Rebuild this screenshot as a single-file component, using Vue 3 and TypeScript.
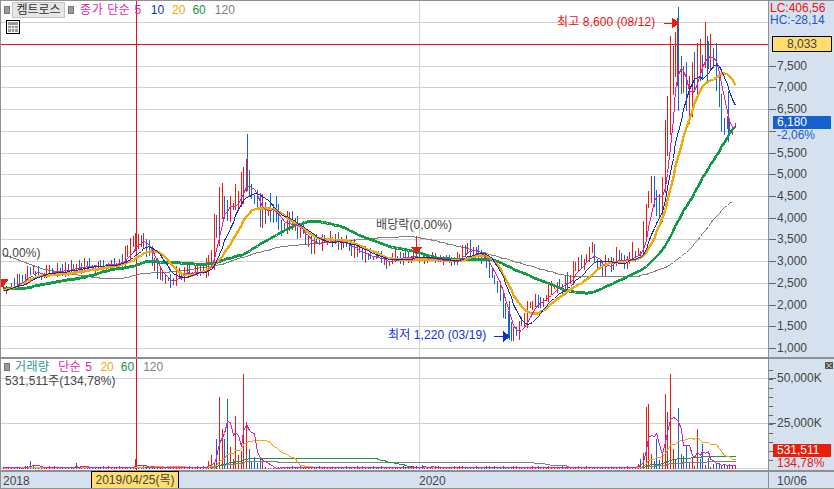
<script setup lang="ts">
type Pt = [number, number]

const lerp = (pts: Pt[], x: number): number => {
  if (x <= pts[0][0]) return pts[0][1]
  for (let i = 1; i < pts.length; i++) {
    if (x <= pts[i][0]) {
      const [a, b] = pts[i - 1]
      const [c, d] = pts[i]
      return b + ((d - b) * (x - a)) / (c - a)
    }
  }
  return pts[pts.length - 1][1]
}
const rnd = (n: number): number => {
  const s = Math.sin(n * 127.1 + 11.7) * 43758.5453
  return s - Math.floor(s)
}
const toPath = (pts: Pt[]): string =>
  pts.map((p, i) => `${i ? 'L' : 'M'}${p[0].toFixed(1)} ${p[1].toFixed(1)}`).join('')

// resample a hand-read curve at candle spacing, soften it and snap to pixels
const smooth = (keys: Pt[]): string => {
  const start = keys[0][0]
  const end = keys[keys.length - 1][0]
  const out: Pt[] = []
  for (let x = start; x <= end + 0.01; x += 2.7) {
    // the window narrows at both ends so the curve still reaches its end points
    const reach = Math.min(2, Math.floor((x - start) / 2.7), Math.floor((end - x) / 2.7))
    let sum = 0
    let cnt = 0
    for (let k = -reach; k <= reach; k++) {
      sum += lerp(keys, x + k * 2.7)
      cnt++
    }
    out.push([Math.round(x) + 0.5, Math.round(sum / cnt) + 0.5])
  }
  return toPath(out)
}

const closeKeys: Pt[] = [[2,288],[10,285],[20,278],[30,268],[40,272],[60,270],[80,264],[100,265],[120,262],[128,252],[135,232],[142,240],[150,262],[160,275],[168,284],[175,275],[190,272],[205,270],[212,240],[218,205],[225,210],[235,195],[245,170],[250,190],[258,205],[270,215],[285,222],[300,230],[310,245],[320,238],[335,242],[350,247],[370,258],[385,262],[400,255],[420,256],[440,260],[455,258],[465,248],[475,250],[485,262],[493,280],[500,300],[507,330],[513,335],[520,320],[530,305],[545,292],[560,285],[575,265],[590,252],[600,268],[615,258],[630,255],[640,250],[645,200],[650,190],[660,205],[665,140],[668,70],[675,50],[680,90],[690,90],[697,60],[705,55],[712,62],[716,85],[720,120],[725,130],[730,128],[735,120]]
const volKeys: Pt[] = [[0,7],[120,9],[135,13],[200,8],[215,24],[250,24],[300,11],[400,8],[480,8],[500,11],[560,10],[640,12],[650,16],[670,36],[712,30],[725,12],[735,8]]

const step = 2.7
const n = Math.floor((735 - 2) / step) + 1
const xs = Array.from({ length: n }, (_, i) => Math.round(2 + i * step))
const closes = xs.map((x, i) => lerp(closeKeys, x) + (rnd(i) - 0.5) * lerp(volKeys, x) * 0.9)

const candles = xs.map((x, i) => {
  const c = closes[i]
  const o = i ? closes[i - 1] : c
  const v = lerp(volKeys, x)
  return {
    x: x + 0.5,
    top: Math.min(o, c) - rnd(i + 500) * v * 0.9,
    bot: Math.max(o, c) + rnd(i + 900) * v * 0.7,
    up: c <= o,
  }
})
candles.push({ x: 246.5, top: 133, bot: 190, up: false })
candles.push({ x: 676.5, top: 17, bot: 85, up: true })
candles.push({ x: 677.5, top: 43, bot: 110, up: false })
candles.push({ x: 508.5, top: 300, bot: 339, up: false })
candles.push({ x: 706.5, top: 35, bot: 80, up: false })
candles.push({ x: 699.5, top: 38, bot: 75, up: true })
candles.push({ x: 669.5, top: 35, bot: 118, up: true })
candles.push({ x: 727.5, top: 90, bot: 141, up: false })

const ma = (arr: number[], w: number): Pt[] =>
  arr.map((_, i): Pt => {
    const s = Math.max(0, i - w + 1)
    const part = arr.slice(s, i + 1)
    return [xs[i] + 0.5, part.reduce((a, b) => a + b, 0) / part.length]
  })
const snap = (pts: Pt[]): Pt[] => pts.map((p): Pt => [p[0], Math.round(p[1]) + 0.5])

const ma5 = toPath(snap(ma(closes, 5)))
const ma10 = toPath(snap(ma(closes, 10)))
const ma20 = smooth([[2,289],[20,284],[33,275],[67,272],[100,267],[127,262],[137,255],[150,248],[163,253],[173,268],[187,276],[203,270],[217,260],[230,242],[247,210],[257,206],[277,208],[287,218],[297,224],[313,235],[320,238],[347,239],[367,248],[390,258],[413,258],[437,258],[457,260],[480,253],[493,258],[503,273],[513,297],[527,312],[537,313],[553,300],[570,287],[583,280],[603,262],[637,258],[647,250],[660,220],[667,197],[675,159],[690,110],[700,83],[713,78],[722,69],[730,75],[735,87]])
const ma60 = smooth([[2,287],[23,287],[50,281],[83,276],[110,268],[133,265],[143,260],[173,261],[200,263],[213,262],[230,256],[243,253],[263,240],[293,224],[313,219],[340,225],[360,235],[387,245],[413,250],[437,257],[463,258],[493,258],[513,268],[537,278],[567,290],[590,292],[618,279],[643,267],[663,247],[677,218],[690,197],[703,173],[712,159],[728,132],[735,123]])
const ma120 = smooth([[2,253],[20,260],[43,268],[67,272],[100,277],[123,277],[140,272],[177,270],[220,263],[250,253],[280,245],[313,242],[360,238],[380,236],[413,235],[437,240],[470,248],[503,257],[537,267],[567,275],[637,275],[663,267],[687,250],[703,230],[720,208],[733,198]])

const priceTop = 347
const priceY = (p: number): number => priceTop - ((p - 1000) / 500) * 21.72
const priceLevels = Array.from({ length: 16 }, (_, i) => 1000 + i * 500)
const priceGrid = priceLevels.map((p) => Math.round(priceY(p)) + 0.5)
const priceLabels = priceLevels
  .filter((p) => p <= 7500 && p !== 6000)
  .map((p) => ({ text: p.toLocaleString('en-US'), y: Math.round(priceY(p)) }))
const priceTicks = priceLevels.filter((p) => p <= 7500).map((p) => Math.round(priceY(p)))

// volume panel
const volBase = 110
const peaks: Pt[] = [[214,30],[217,72],[220,40],[223,30],[226,70],[229,22],[233,53],[236,14],[240,18],[243,95],[245,47],[249,20],[253,12],[644,62],[646,65],[651,15],[655,30],[664,75],[667,57],[669,95],[672,20],[676,61],[680,14],[684,24],[690,12],[696,40],[700,25],[135,10],[29,8],[75,6],[420,4]]
const volumes = xs.map((x, i) => {
  let h = 1 + rnd(i + 40) * 2
  if (x > 205 && x < 262) h += rnd(i + 70) * 12
  if (x > 636 && x < 712) h += rnd(i + 80) * 14
  if (x >= 712) h += rnd(i + 81) * 4
  return h
})
peaks.forEach(([px, h]) => {
  const idx = Math.round((px - 2) / step)
  if (idx >= 0 && idx < volumes.length) volumes[idx] = Math.max(volumes[idx], h)
})
const volBars = xs.map((x, i) => ({
  x: x + 0.5,
  top: volBase - volumes[i],
  up: candles[i].up,
}))
const volLine = (w: number): string =>
  toPath(ma(volumes, w).map((p): Pt => [p[0], Math.round(volBase - p[1]) + 0.5]))
const vol5 = volLine(5)
const vol20 = volLine(20)
const vol60 = volLine(60)
const vol120 = volLine(120)

const volMinor = [11, 20, 29, 38, 47, 56, 65, 74, 83, 92, 101]
</script>

<template>
  <div class="page">
    <div class="row top">
      <div class="plot">
        <svg class="chart" width="767" height="356" viewBox="0 0 767 356">
          <g class="grid">
            <line v-for="y in priceGrid" :key="y" x1="0" x2="767" :y1="y" :y2="y" />
            <line x1="418.5" x2="418.5" y1="0" y2="356" />
          </g>
          <line class="hair" x1="0" x2="767" y1="43.5" y2="43.5" />
          <line class="hair" x1="135.5" x2="135.5" y1="0" y2="356" />
          <path class="l120" :d="ma120" />
          <g>
            <line v-for="(c, i) in candles" :key="i" :x1="c.x" :x2="c.x" :y1="c.top" :y2="c.bot" :class="c.up ? 'up' : 'down'" />
          </g>
          <path class="l60" :d="ma60" />
          <path class="l20" :d="ma20" />
          <path class="l5" :d="ma5" />
          <path class="l10" :d="ma10" />
          <path class="mark-red" d="M663 22.5H671M671 17L677 22L671 27Z" />
          <path class="mark-red" d="M415.5 235V246M410 246H421L415.5 252Z" />
          <path class="mark-red" d="M0 278H7L2 285L0 285Z" />
          <path class="mark-blue" d="M493 335.5H502M502 330L508 335.5L502 341Z" />
        </svg>

        <div class="legend">
          <span class="chip"></span>
          <span class="name">켐트로스</span>
          <span class="chip"></span>
          <span class="mag lead">종가 단순 5</span>
          <span class="blue">10</span>
          <span class="org">20</span>
          <span class="grn">60</span>
          <span class="gry">120</span>
        </div>
        <div class="table-icon">
          <svg width="14" height="14" viewBox="0 0 14 14">
            <rect x="0.5" y="0.5" width="13" height="13" fill="#fff" stroke="#000" />
            <rect x="2" y="2" width="10" height="10" fill="#9a9a9a" />
            <path d="M2 5.5H12M2 8.5H12M5.5 5V12M8.5 5V12" stroke="#e8e8e8" fill="none" />
          </svg>
        </div>

        <span class="note red note-high">최고 8,600 (08/12)</span>
        <span class="note dark note-div">배당락(0,00%)</span>
        <span class="note dark note-left">0,00%)</span>
        <span class="note navy note-low">최저 1,220 (03/19)</span>
      </div>
      <div class="axis">
        <div class="lc">LC:406,56</div>
        <div class="hc">HC:-28,14</div>
        <div class="tag-yellow">8,033</div>
        <i v-for="y in priceTicks" :key="y" class="tick" :style="{ top: y + 'px' }"></i>
        <span v-for="l in priceLabels" :key="l.y" class="axis-label" :style="{ top: l.y - 7 + 'px' }">{{ l.text }}</span>
        <div class="tag-blue">6,180</div>
        <div class="pct-blue">-2,06%</div>
      </div>
    </div>

    <div class="row mid">
      <div class="plot">
        <svg class="chart" width="767" height="111" viewBox="0 0 767 111">
          <g class="grid">
            <line x1="0" x2="767" y1="19.5" y2="19.5" />
            <line x1="0" x2="767" y1="64.5" y2="64.5" />
            <line x1="0" x2="767" y1="109.5" y2="109.5" />
            <line x1="418.5" x2="418.5" y1="0" y2="111" />
          </g>
          <line class="hair" x1="135.5" x2="135.5" y1="0" y2="111" />
          <line v-for="(b, i) in volBars" :key="i" :x1="b.x" :x2="b.x" :y1="b.top" :y2="volBase" :class="b.up ? 'up' : 'down'" />
          <path class="v120" :d="vol120" />
          <path class="v60" :d="vol60" />
          <path class="v20" :d="vol20" />
          <path class="v5" :d="vol5" />
        </svg>
        <div class="legend vol">
          <span class="chip"></span>
          <span class="teal">거래량</span>
          <span class="mag">단순 5</span>
          <span class="org">20</span>
          <span class="grn">60</span>
          <span class="gry">120</span>
        </div>
        <span class="note dark note-vol">531,511주(134,78%)</span>
      </div>
      <div class="axis">
        <span class="close-btn">
          <svg width="8" height="7" viewBox="0 0 8 7"><path d="M1.5 1L6.5 6M6.5 1L1.5 6" stroke="#ddd" fill="none" /></svg>
        </span>
        <i v-for="y in volMinor" :key="y" class="tick small" :style="{ top: y + 'px' }"></i>
        <i class="tick major-a"></i>
        <i class="tick major-b"></i>
        <span class="axis-label vol-a">50,000K</span>
        <span class="axis-label vol-b">25,000K</span>
        <div class="tag-red">531,511</div>
        <div class="pct-red">134,78%</div>
      </div>
    </div>

    <div class="row bottom">
      <div class="dates">
        <span class="date-a">2018</span>
        <span class="date-tag">2019/04/25(목)</span>
        <span class="date-b">2020</span>
      </div>
      <div class="end-date">10/06</div>
    </div>
  </div>
</template>

<style scoped>
.page {
  width: 834px;
  height: 489px;
  box-sizing: border-box;
  border-top: 1px solid #909090;
  border-left: 1px solid #909090;
  border-bottom: 1px solid #909090;
  display: flex;
  flex-direction: column;
  font-family: "Liberation Sans", "Noto Sans CJK KR", sans-serif;
  font-size: 12px;
  color: #444;
  overflow: hidden;
  background: #fff;
}
.row {
  display: flex;
}
.top {
  height: 356px;
  border-bottom: 2px solid #8f8f8f;
}
.mid {
  height: 111px;
  border-bottom: 2px solid #8f8f8f;
}
.bottom {
  flex: 1;
  background: #d6e1ef;
}
.plot {
  position: relative;
  width: 767px;
  overflow: hidden;
  flex: none;
}
.axis {
  position: relative;
  flex: 1;
  background: #d6e1ef;
  border-left: 1px solid #8f8f8f;
}
.chart {
  display: block;
}
.chart line,
.chart path {
  fill: none;
}
.grid line {
  stroke: #d0d0d0;
  stroke-width: 1;
  shape-rendering: crispEdges;
}
.hair {
  stroke: #e8140f;
  stroke-width: 1;
  shape-rendering: crispEdges;
}
.up {
  stroke: #ee1a10;
  stroke-width: 1;
  shape-rendering: crispEdges;
}
.down {
  stroke: #1464d2;
  stroke-width: 1;
  shape-rendering: crispEdges;
}
.l5 {
  stroke: #e21fb4;
  stroke-width: 1;
  shape-rendering: crispEdges;
}
.l10 {
  stroke: #1030b0;
  stroke-width: 1;
  shape-rendering: crispEdges;
}
.l20 {
  stroke: #f0aa08;
  stroke-width: 2.4;
  shape-rendering: crispEdges;
}
.l60 {
  stroke: #0f9c42;
  stroke-width: 2.6;
  shape-rendering: crispEdges;
}
.l120 {
  stroke: #808080;
  stroke-width: 1;
  shape-rendering: crispEdges;
}
.v5,
.v20,
.v60,
.v120 {
  stroke-width: 1;
  shape-rendering: crispEdges;
}
.v5 {
  stroke: #e21fb4;
}
.v20 {
  stroke: #f0aa08;
}
.v60 {
  stroke: #0f9c42;
}
.v120 {
  stroke: #808080;
}
.chart .mark-red {
  fill: #ee1a10;
  stroke: #ee1a10;
  stroke-width: 1;
  shape-rendering: crispEdges;
}
.chart .mark-blue {
  fill: #0a30e0;
  stroke: #0a30e0;
  stroke-width: 1;
  shape-rendering: crispEdges;
}
.legend {
  position: absolute;
  left: 3px;
  top: 1px;
  display: flex;
  align-items: center;
  height: 16px;
  line-height: 16px;
}
.chip {
  width: 4px;
  height: 6px;
  background: #999;
  border: 1px solid #777;
  flex: none;
}
.name {
  margin: 0 3px 0 2px;
  width: 53px;
  box-sizing: border-box;
  text-align: center;
  background: #e6e6e6;
  border: 1px solid #c4c4c4;
  height: 16px;
  line-height: 14px;
  color: #333;
}
.lead {
  margin-left: 6px;
  margin-right: 9px;
  letter-spacing: 0.6px;
}
.mag {
  color: #e01fb0;
}
.blue {
  color: #0c2cc0;
  margin-right: 8px;
}
.org {
  color: #f0a800;
  margin-right: 7px;
}
.grn {
  color: #109a40;
  margin-right: 9px;
}
.gry {
  color: #808080;
}
.teal {
  color: #2c9a96;
  margin: 0 9px 0 5px;
  letter-spacing: 0.4px;
}
.legend.vol {
  top: 0;
}
.legend.vol .mag {
  margin-right: 8px;
  letter-spacing: 0.5px;
}
.table-icon {
  position: absolute;
  left: 5px;
  top: 19px;
  height: 14px;
  background: #fff;
}
.table-icon svg {
  display: block;
}
.note {
  position: absolute;
  white-space: nowrap;
  line-height: 14px;
  letter-spacing: 0.1px;
}
.red {
  color: #e8140f;
}
.dark {
  color: #444;
}
.navy {
  color: #0a2ee0;
}
.note-high {
  left: 556px;
  top: 14px;
}
.note-div {
  left: 375px;
  top: 217px;
}
.note-left {
  left: 1px;
  top: 245px;
}
.note-low {
  left: 387px;
  top: 327px;
}
.note-vol {
  left: 4px;
  top: 15px;
}
.lc,
.hc {
  position: absolute;
  left: 1px;
  line-height: 12px;
  white-space: nowrap;
}
.lc {
  top: 1px;
  color: #e8140f;
}
.hc {
  top: 13px;
  color: #1a58c8;
}
.tag-yellow {
  position: absolute;
  left: 3px;
  top: 35px;
  width: 60px;
  height: 16px;
  box-sizing: border-box;
  background: #ffdd70;
  border: 1px solid #000;
  text-align: center;
  line-height: 14px;
}
.tag-blue,
.tag-red {
  position: absolute;
  left: 4px;
  width: 58px;
  box-sizing: border-box;
  padding-left: 4px;
  height: 13px;
  line-height: 13px;
  color: #fff;
}
.tag-blue {
  top: 115px;
  background: #1460cc;
}
.tag-red {
  top: 85px;
  background: #e81e0a;
}
.pct-blue,
.pct-red {
  position: absolute;
  left: 8px;
  line-height: 12px;
  white-space: nowrap;
}
.pct-blue {
  top: 128px;
  color: #1a58c8;
}
.pct-red {
  top: 98px;
  color: #e8140f;
}
.tick {
  position: absolute;
  left: 0;
  width: 7px;
  height: 1px;
  background: #666;
}
.tick.small {
  width: 4px;
}
.major-a {
  top: 19px;
}
.major-b {
  top: 64px;
}
.axis-label {
  position: absolute;
  left: 8px;
  line-height: 14px;
  white-space: nowrap;
  color: #444;
}
.vol-a {
  top: 12px;
}
.vol-b {
  top: 57px;
}
.close-btn {
  position: absolute;
  right: 1px;
  top: 3px;
  width: 8px;
  height: 7px;
  background: #555;
  display: block;
}
.close-btn svg {
  display: block;
}
.dates {
  position: relative;
  width: 767px;
  flex: none;
}
.end-date {
  flex: 1;
  border-left: 1px solid #8f8f8f;
  padding-left: 8px;
  line-height: 18px;
}
.date-a,
.date-b {
  position: absolute;
  top: 0;
  line-height: 18px;
}
.date-a {
  left: 2px;
}
.date-b {
  left: 418px;
}
.date-tag {
  position: absolute;
  left: 90px;
  top: -1px;
  width: 88px;
  height: 19px;
  box-sizing: border-box;
  background: #ffdd70;
  border: 1px solid #000;
  text-align: center;
  line-height: 17px;
  white-space: nowrap;
  color: #444;
}
</style>
